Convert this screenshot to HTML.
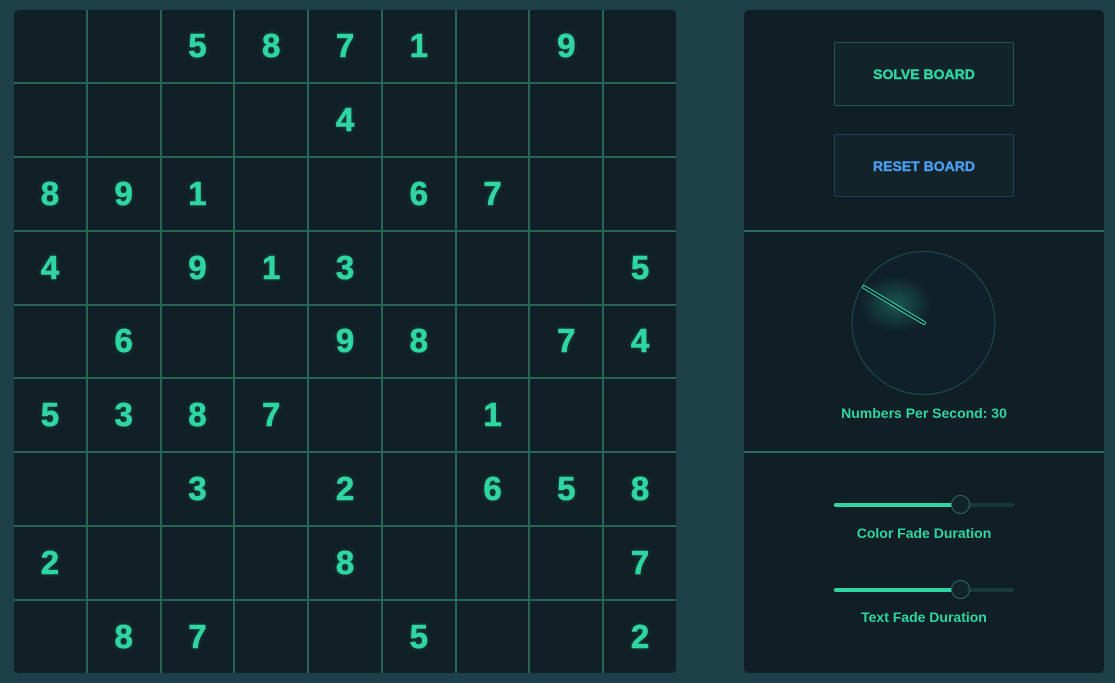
<!DOCTYPE html>
<html><head><meta charset="utf-8"><style>
*{margin:0;padding:0;box-sizing:border-box}
body{width:1115px;height:683px;background:#1d3f47;font-family:"Liberation Sans",sans-serif;position:relative;overflow:hidden}
.board{position:absolute;left:14px;top:10px;width:662px;height:663px;background:#276558;border-radius:4px;display:grid;grid-template-columns:repeat(9,1fr);grid-template-rows:repeat(9,1fr);gap:2px;overflow:hidden}
.board div{background:#112027;color:#2fd6a2;font-weight:bold;font-size:33px;display:flex;align-items:center;justify-content:center;text-shadow:0 0 4px rgba(47,214,162,.3);-webkit-text-stroke:0.6px #2fd6a2}
.side{position:absolute;left:744px;top:10px;width:360px;height:663px;background:#101f26;border-radius:5px;overflow:hidden}
.div{position:absolute;left:0;width:360px;height:2px;background:#2a6b60}
.btn{position:absolute;left:90px;width:180px;border-radius:2px;display:flex;align-items:center;justify-content:center;font-weight:bold;font-size:14px;background:#12232a;-webkit-text-stroke:0.4px currentColor}
.lbl{position:absolute;left:0;width:360px;text-align:center;color:#2fd6a2;font-size:14px;font-weight:bold}
.track{position:absolute;left:90px;width:180px;height:4px;border-radius:2px;background:#173a37}
.fill{position:absolute;left:0;top:0;height:4px;width:126px;border-radius:2px;background:#2fd6a2}
.thumb{position:absolute;left:117px;top:-8px;width:19px;height:19px;border-radius:50%;border:1.5px solid #2a6b60;background:#12232a}
</style></head><body>
<div class="board">
<div></div><div></div><div>5</div><div>8</div><div>7</div><div>1</div><div></div><div>9</div><div></div>
<div></div><div></div><div></div><div></div><div>4</div><div></div><div></div><div></div><div></div>
<div>8</div><div>9</div><div>1</div><div></div><div></div><div>6</div><div>7</div><div></div><div></div>
<div>4</div><div></div><div>9</div><div>1</div><div>3</div><div></div><div></div><div></div><div>5</div>
<div></div><div>6</div><div></div><div></div><div>9</div><div>8</div><div></div><div>7</div><div>4</div>
<div>5</div><div>3</div><div>8</div><div>7</div><div></div><div></div><div>1</div><div></div><div></div>
<div></div><div></div><div>3</div><div></div><div>2</div><div></div><div>6</div><div>5</div><div>8</div>
<div>2</div><div></div><div></div><div></div><div>8</div><div></div><div></div><div></div><div>7</div>
<div></div><div>8</div><div>7</div><div></div><div></div><div>5</div><div></div><div></div><div>2</div>
</div>
<div class="side">
<div class="btn" style="top:32px;height:64px;border:1px solid #1d5a4e;color:#2fd6a2">SOLVE BOARD</div>
<div class="btn" style="top:124px;height:63px;border:1px solid #21425e;color:#4c9df0">RESET BOARD</div>
<div class="div" style="top:220px"></div>
<svg style="position:absolute;left:0;top:222px" width="360" height="230">
<defs><radialGradient id="g" cx="0.5" cy="0.5" r="0.5"><stop offset="0" stop-color="#2fd6a2" stop-opacity=".3"/><stop offset="1" stop-color="#2fd6a2" stop-opacity="0"/></radialGradient></defs>
<circle cx="179.5" cy="91" r="71.5" fill="#10202a" stroke="#1f4f4a" stroke-width="1"/>
<ellipse cx="152" cy="72" rx="36" ry="28" fill="url(#g)"/>
<line x1="180" y1="91" x2="120" y2="55" stroke="#2fd6a2" stroke-width="4" stroke-linecap="round"/>
<line x1="180" y1="91" x2="120" y2="55" stroke="#10202a" stroke-width="2" stroke-linecap="round"/>
</svg>
<div class="lbl" style="top:395px">Numbers Per Second: 30</div>
<div class="div" style="top:441px"></div>
<div class="track" style="top:493px"><div class="fill"></div><div class="thumb"></div></div>
<div class="lbl" style="top:515px">Color Fade Duration</div>
<div class="track" style="top:578px"><div class="fill"></div><div class="thumb"></div></div>
<div class="lbl" style="top:599px">Text Fade Duration</div>
</div>
</body></html>
